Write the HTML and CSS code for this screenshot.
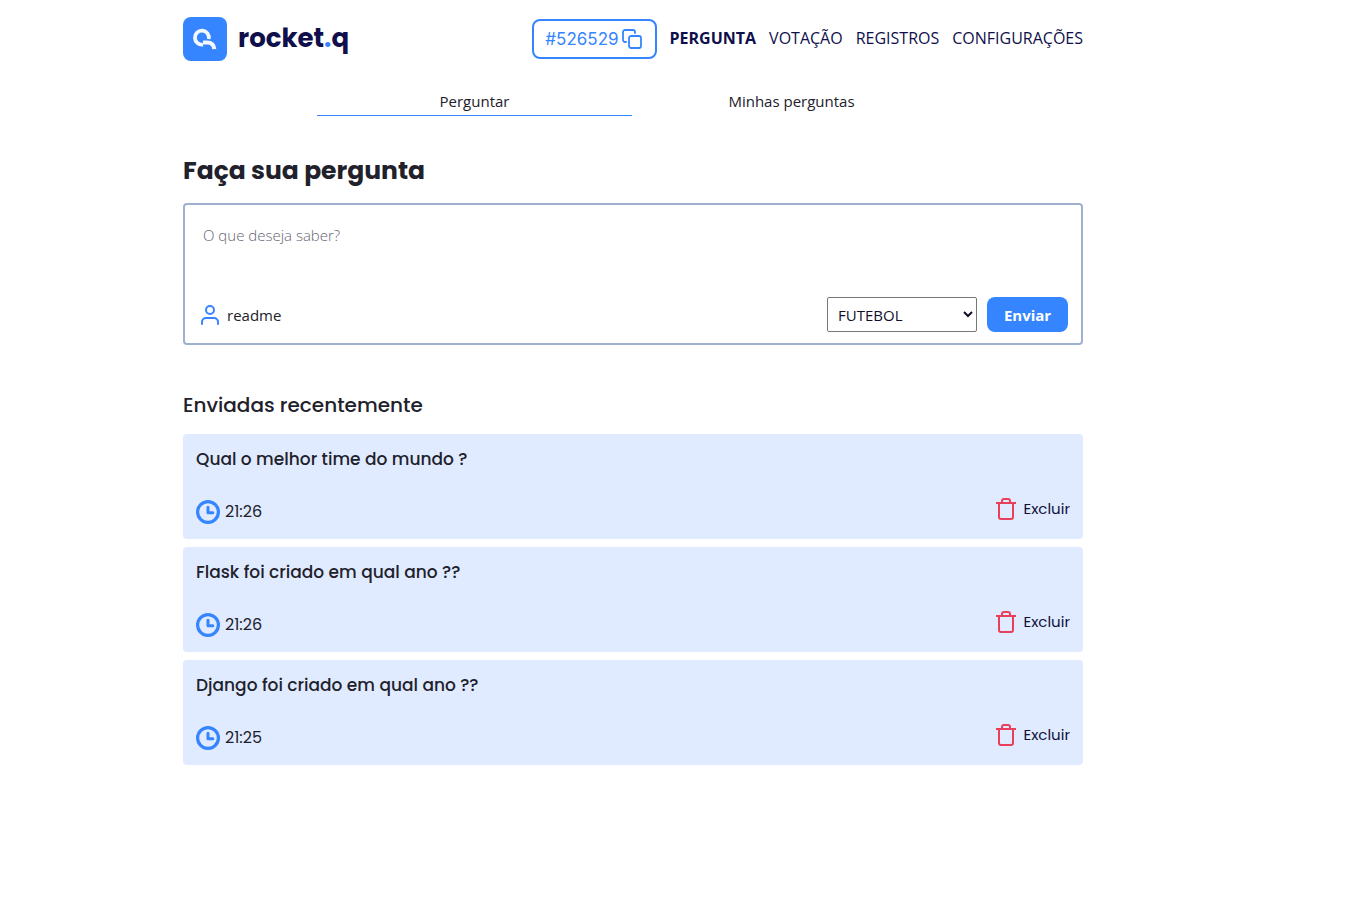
FILE: index.html
```html
<!DOCTYPE html>
<html lang="pt-BR">
<head>
  <meta charset="utf-8">
  <meta name="viewport" content="width=device-width, initial-scale=1">
  <title>rocket.q</title>
  <link rel="stylesheet" href="styles.css">
</head>
<body>
  <svg class="sprite" aria-hidden="true">
    <symbol id="clock" viewBox="0 0 24 24">
      <circle cx="12" cy="12" r="10.4" fill="none" stroke="#3485ff" stroke-width="3.2"/>
      <path d="M12 7.200V12.700h4.800" fill="none" stroke="#3485ff" stroke-width="3" stroke-linejoin="round" stroke-linecap="round"/>
    </symbol>
    <symbol id="trash" viewBox="0 0 20 22">
      <path d="M0 5h20M6 5V3a2 2 0 0 1 2-2h4a2 2 0 0 1 2 2v2M3 5v14a2 2 0 0 0 2 2h10a2 2 0 0 0 2-2V5" fill="none" stroke="#e83f5b" stroke-width="2"/>
    </symbol>
  </svg>
  <div class="page">
    <header class="header">
      <a class="logo" href="#">
        <svg width="44" height="44" viewBox="0 0 44 44" aria-hidden="true">
          <rect width="44" height="44" rx="8" fill="#3485ff"/>
          <path d="M20 27.600A7 7 0 1 1 25.800 22" fill="none" stroke="#f3f7ff" stroke-width="3.800"/>
          <path d="M20 25.400H24c4.500 0 7 2 7.300 6.800" fill="none" stroke="#f3f7ff" stroke-width="4"/>
        </svg>
        <span class="logo-text">rocket<span class="logo-dot">.</span>q</span>
      </a>
      <nav class="nav">
        <button class="room" type="button">#526529
          <svg width="20" height="20" viewBox="0 0 20 20" fill="none" stroke="#3485ff" stroke-width="1.800" stroke-linejoin="round" stroke-linecap="round" aria-hidden="true">
            <rect x="7" y="7" width="12" height="12" rx="2"/>
            <path d="M4 13H3a2 2 0 0 1-2-2V3a2 2 0 0 1 2-2h8a2 2 0 0 1 2 2v1"/>
          </svg>
        </button>
        <a class="nav-link nav-active" href="#">PERGUNTA</a>
        <a class="nav-link" href="#">VOTAÇÃO</a>
        <a class="nav-link" href="#">REGISTROS</a>
        <a class="nav-link" href="#">CONFIGURAÇÕES</a>
      </nav>
    </header>
    <div class="tabs">
      <a class="tab tab-active" href="#">Perguntar</a>
      <a class="tab" href="#">Minhas perguntas</a>
    </div>
    <main>
      <h1 class="title">Faça sua pergunta</h1>
      <form class="ask">
        <textarea class="ask-text" aria-label="Pergunta" placeholder="O que deseja saber?"></textarea>
        <div class="ask-bar">
          <span class="user">
            <svg width="18" height="20" viewBox="0 0 18 20" fill="none" stroke="#3485ff" stroke-width="2" stroke-linecap="round" aria-hidden="true">
              <circle cx="9" cy="5" r="4"/>
              <path d="M1 19v-2a4 4 0 0 1 4-4h8a4 4 0 0 1 4 4v2"/>
            </svg>
            readme
          </span>
          <select class="topic" aria-label="Tema"><option>FUTEBOL</option></select>
          <button class="send" type="button">Enviar</button>
        </div>
      </form>
      <h2 class="subtitle">Enviadas recentemente</h2>
      <ul class="list">
        <li class="card">
          <p class="question">Qual o melhor time do mundo ?</p>
          <div class="card-bar">
            <span class="time"><svg width="24" height="24"><use href="#clock"/></svg>21:26</span>
            <button class="delete" type="button"><svg width="20" height="22"><use href="#trash"/></svg>Excluir</button>
          </div>
        </li>
        <li class="card">
          <p class="question">Flask foi criado em qual ano ??</p>
          <div class="card-bar">
            <span class="time"><svg width="24" height="24"><use href="#clock"/></svg>21:26</span>
            <button class="delete" type="button"><svg width="20" height="22"><use href="#trash"/></svg>Excluir</button>
          </div>
        </li>
        <li class="card">
          <p class="question">Django foi criado em qual ano ??</p>
          <div class="card-bar">
            <span class="time"><svg width="24" height="24"><use href="#clock"/></svg>21:25</span>
            <button class="delete" type="button"><svg width="20" height="22"><use href="#trash"/></svg>Excluir</button>
          </div>
        </li>
      </ul>
    </main>
  </div>
</body>
</html>
```
FILE: styles.css
```css
* { box-sizing: border-box; }
body {
  margin: 0;
  padding: 17px 93px 24px 0;
  background: #fff;
  color: #21212b;
  font-family: "Open Sans", sans-serif;
  font-size: 15px;
}
h1, h2, p, ul { margin: 0; padding: 0; }
a { color: inherit; text-decoration: none; }
button, select, textarea { font: inherit; color: inherit; }
button { cursor: pointer; }
svg { flex: none; }
.sprite { position: absolute; width: 0; height: 0; }
.page { max-width: 900px; margin: 0 auto; }
.header { display: flex; justify-content: space-between; align-items: center; color: #0f0f4b; }
.logo { display: flex; align-items: center; gap: 11px; }
.logo-text { padding-bottom: 2px; font: 700 26px/40px Poppins, Inter, sans-serif; }
.logo-dot { color: #3485ff; }
.nav { display: flex; align-items: center; gap: 13px; font-size: 16px; }
.nav-link { padding-bottom: 2px; }
.nav-active { font-weight: 700; }
.room {
  display: flex;
  align-items: center;
  gap: 3px;
  height: 40px;
  padding: 0 13px 0 11px;
  border: 2px solid #3485ff;
  border-radius: 8px;
  background: #fff;
  color: #3485ff;
  font: 400 17px/24px Inter, sans-serif;
}
.tabs { display: grid; grid-template-columns: 1fr 1fr; gap: 2px; width: 632px; max-width: 100%; margin: 29px auto 0; text-align: center; }
.tab { padding-bottom: 3px; line-height: 22px; border-bottom: 1px solid transparent; }
.tab-active { border-color: #3485ff; }
.title { margin-top: 37px; font: 700 25px/36px Poppins, Inter, sans-serif; }
.ask { margin-top: 14px; padding: 11px 13px; border: 2px solid #9fb0d0; border-radius: 4px; }
.ask-text { display: block; width: 100%; height: 81px; padding: 8px 5px; border: 0; outline: 0; resize: none; background: none; font-size: 15px; line-height: 22px; }
.ask-text::placeholder { color: #656572; font-weight: 300; }
.ask-bar { display: flex; align-items: center; gap: 10px; }
.user { display: flex; align-items: center; gap: 8px; flex: 1; padding-left: 3px; }
.topic { width: 150px; height: 35px; padding: 0 6px; border: 1px solid #767676; border-radius: 2px; background: #fff; color: #0f0f2b; font-size: 15px; }
.send { width: 81px; height: 35px; border: 0; border-radius: 8px; background: #3485ff; color: #fff; font-weight: 700; }
.subtitle { margin-top: 45px; font: 500 20px/30px Poppins, Inter, sans-serif; }
.list { display: grid; gap: 8px; margin-top: 14px; list-style: none; font-family: Poppins, Inter, sans-serif; }
.card { padding: 13px 13px 14px; border-radius: 4px; background: #e0ebff; }
.question { font-size: 17px; line-height: 24px; font-weight: 500; }
.card-bar { display: flex; justify-content: space-between; align-items: flex-start; margin-top: 26px; }
.time { display: flex; align-items: center; gap: 5px; padding-top: 3px; padding-bottom: 1px; font-size: 16px; line-height: 24px; }
.delete { display: flex; align-items: center; gap: 7px; padding: 0; border: 0; background: none; color: #0f0f3b; line-height: 24px; }
```
